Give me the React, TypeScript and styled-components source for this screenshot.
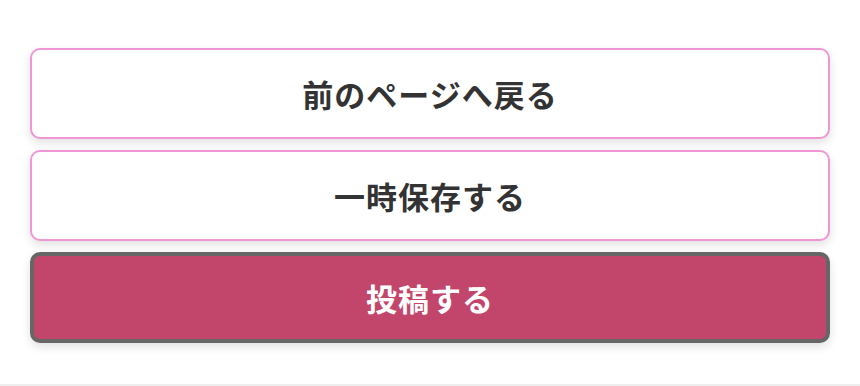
import React from "react";
import styled, { createGlobalStyle } from "styled-components";

const GlobalStyle = createGlobalStyle`
  body {
    margin: 0;
    background: #fff;
    font-family: "Noto Sans CJK JP", "Noto Sans", sans-serif;
  }
`;

const Page = styled.div`
  width: 860px;
  height: 386px;
  display: flex;
  flex-direction: column;
  overflow: hidden;
`;

const Actions = styled.div`
  display: flex;
  flex-direction: column;
  gap: 11px;
  padding: 48px 30px 41px;
`;

const Button = styled.button<{ $primary?: boolean }>`
  height: 91px;
  width: 100%;
  box-sizing: border-box;
  border-radius: 10px;
  border: ${(p) => (p.$primary ? "4px solid #666666" : "2px solid #ef97d4")};
  background: ${(p) => (p.$primary ? "#c2466b" : "#ffffff")};
  color: ${(p) => (p.$primary ? "#ffffff" : "#333333")};
  font-family: "Noto Sans CJK JP", "Noto Sans", sans-serif;
  font-size: 31px;
  font-weight: 700;
  letter-spacing: 1px;
  box-shadow: 0 4px 10px rgba(0, 0, 0, 0.12);
  cursor: pointer;
`;

const Footer = styled.div`
  flex: 1;
  background: #eeeeee;
`;

export default function App() {
  return (
    <Page>
      <GlobalStyle />
      <Actions>
        <Button>前のページへ戻る</Button>
        <Button>一時保存する</Button>
        <Button $primary>投稿する</Button>
      </Actions>
      <Footer />
    </Page>
  );
}
